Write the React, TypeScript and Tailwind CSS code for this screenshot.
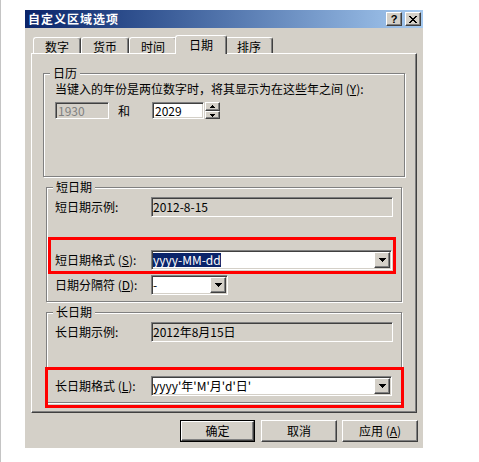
import React from "react";

const sunken =
  "border border-t-[#808080] border-l-[#808080] border-b-white border-r-white shadow-[inset_1px_1px_0_#404040,inset_-1px_-1px_0_#d4d0c8]";
const raised =
  "border border-t-white border-l-white border-b-[#404040] border-r-[#404040] shadow-[inset_-1px_-1px_0_#808080]";

function DownArrow() {
  return (
    <svg width="7" height="4" viewBox="0 0 7 4" shapeRendering="crispEdges">
      <rect x="0" y="0" width="7" height="1" fill="#000" />
      <rect x="1" y="1" width="5" height="1" fill="#000" />
      <rect x="2" y="2" width="3" height="1" fill="#000" />
      <rect x="3" y="3" width="1" height="1" fill="#000" />
    </svg>
  );
}

function SmallArrow({ up }: { up?: boolean }) {
  return (
    <svg width="5" height="3" viewBox="0 0 5 3" shapeRendering="crispEdges">
      {up ? (
        <>
          <rect x="2" y="0" width="1" height="1" fill="#000" />
          <rect x="1" y="1" width="3" height="1" fill="#000" />
          <rect x="0" y="2" width="5" height="1" fill="#000" />
        </>
      ) : (
        <>
          <rect x="0" y="0" width="5" height="1" fill="#000" />
          <rect x="1" y="1" width="3" height="1" fill="#000" />
          <rect x="2" y="2" width="1" height="1" fill="#000" />
        </>
      )}
    </svg>
  );
}

function CloseGlyph() {
  return (
    <svg width="8" height="7" viewBox="0 0 8 7" shapeRendering="crispEdges">
      <rect x="0" y="0" width="2" height="1" fill="#000" />
      <rect x="6" y="0" width="2" height="1" fill="#000" />
      <rect x="1" y="1" width="2" height="1" fill="#000" />
      <rect x="5" y="1" width="2" height="1" fill="#000" />
      <rect x="2" y="2" width="4" height="1" fill="#000" />
      <rect x="3" y="3" width="2" height="1" fill="#000" />
      <rect x="2" y="4" width="4" height="1" fill="#000" />
      <rect x="1" y="5" width="2" height="1" fill="#000" />
      <rect x="5" y="5" width="2" height="1" fill="#000" />
      <rect x="0" y="6" width="2" height="1" fill="#000" />
      <rect x="6" y="6" width="2" height="1" fill="#000" />
    </svg>
  );
}

function Group({
  label,
  className,
  children,
}: {
  label: string;
  className: string;
  children: React.ReactNode;
}) {
  return (
    <div
      className={`relative flex flex-col border border-[#808080] shadow-[inset_1px_1px_0_#fff,1px_1px_0_#fff] ${className}`}
    >
      <span className="absolute left-[6px] top-[-8px] bg-[#d4d0c8] px-[3px] leading-[14px]">
        {label}
      </span>
      {children}
    </div>
  );
}

function Row({
  className,
  label,
  children,
}: {
  className: string;
  label: React.ReactNode;
  children: React.ReactNode;
}) {
  return (
    <div className={`flex items-center pl-[8px] ${className}`}>
      <div className="w-[96px] shrink-0">{label}</div>
      {children}
    </div>
  );
}

function Combo({ className, children }: { className: string; children: React.ReactNode }) {
  return (
    <div className={`${sunken} bg-white h-[20px] flex items-center pl-[1px] pr-[1px] ${className}`}>
      <div className="flex-1 flex items-center whitespace-nowrap">{children}</div>
      <div className={`${raised} bg-[#d4d0c8] w-[16px] h-[16px] flex items-center justify-center`}>
        <DownArrow />
      </div>
    </div>
  );
}

function Tab({ label, selected }: { label: string; selected?: boolean }) {
  if (selected) {
    return (
      <div className="relative z-10 w-[52px] -mx-[2px] h-[19px] -mb-[1px] bg-[#d4d0c8] border-l border-t border-white border-r border-r-[#404040] rounded-t-[3px] shadow-[inset_-1px_0_0_#808080] flex justify-center pt-[2px]">
        {label}
      </div>
    );
  }
  return (
    <div className="w-[48px] h-[16px] bg-[#d4d0c8] border-l border-t border-white border-r border-r-[#404040] rounded-t-[3px] shadow-[inset_-1px_0_0_#808080] flex justify-center pt-[2px]">
      {label}
    </div>
  );
}

function Button({
  children,
  def,
  className,
}: {
  children: React.ReactNode;
  def?: boolean;
  className: string;
}) {
  if (def) {
    return (
      <div className={`border border-black h-[22px] ${className}`}>
        <div className={`${raised} h-full bg-[#d4d0c8] flex items-center justify-center`}>
          {children}
        </div>
      </div>
    );
  }
  return (
    <div className={`${raised} h-[22px] bg-[#d4d0c8] flex items-center justify-center ${className}`}>
      {children}
    </div>
  );
}

export default function App() {
  return (
    <div className="w-[479px] h-[462px] bg-white border-l border-[#c4c4c4] pl-[24px] pt-[10px] font-['Noto_Sans_CJK_SC',sans-serif] text-[12px] leading-[14px] text-black">
      <div className="w-[398px] h-[438px] bg-[#d4d0c8] flex flex-col">
        {/* Title bar */}
        <div className="h-[18px] bg-linear-to-r from-[#0a246a] to-[#a6caf0] flex items-center pl-[3px] pr-[2px]">
          <span className="flex-1 text-white font-bold tracking-[1px]">自定义区域选项</span>
          <div className="flex gap-[3px]">
            <div
              className={`${raised} w-[16px] h-[14px] bg-[#d4d0c8] flex items-center justify-center font-['Liberation_Sans',sans-serif] font-bold text-[11px] leading-[11px]`}
            >
              ?
            </div>
            <div className={`${raised} w-[16px] h-[14px] bg-[#d4d0c8] flex items-center justify-center`}>
              <CloseGlyph />
            </div>
          </div>
        </div>

        <div className="pl-[6px] pt-[7px] flex flex-col">
          {/* Tabs */}
          <div className="flex items-end h-[18px] pl-[2px]">
            <Tab label="数字" />
            <Tab label="货币" />
            <Tab label="时间" />
            <Tab label="日期" selected />
            <Tab label="排序" />
          </div>

          {/* Panel */}
          <div className="w-[386px] h-[360px] border-l border-t border-white border-r border-b border-r-[#404040] border-b-[#404040] shadow-[inset_-1px_-1px_0_#808080] flex flex-col">
            <Group label="日历" className="ml-[11px] mt-[19px] w-[362px] h-[104px]">
              <div className="pl-[11px] mt-[8px] whitespace-nowrap">
                当键入的年份是两位数字时，将其显示为在这些年之间 (<u>Y</u>):
              </div>
              <div className="pl-[11px] mt-[6px] flex items-center h-[17px]">
                <div className={`${sunken} w-[54px] h-[17px] bg-[#d4d0c8] text-[#808080] pl-[2px] flex items-center`}>
                  1930
                </div>
                <div className="w-[43px] pl-[9px]">和</div>
                <div className={`${sunken} w-[52px] h-[17px] bg-white pl-[2px] flex items-center`}>
                  2029
                </div>
                <div className="ml-[1px] flex flex-col w-[15px] h-[17px]">
                  <div className={`${raised} h-[9px] bg-[#d4d0c8] flex items-center justify-center`}>
                    <SmallArrow up />
                  </div>
                  <div className={`${raised} h-[8px] bg-[#d4d0c8] flex items-center justify-center`}>
                    <SmallArrow />
                  </div>
                </div>
              </div>
            </Group>

            <Group label="短日期" className="ml-[14px] mt-[10px] w-[356px] h-[115px]">
              <Row className="mt-[9px]" label="短日期示例:">
                <div className={`${sunken} w-[242px] h-[20px] bg-[#d4d0c8] pl-[1px] flex items-center`}>
                  2012-8-15
                </div>
              </Row>
              <Row
                className="mt-[33px]"
                label={
                  <>
                    短日期格式 (<u>S</u>):
                  </>
                }
              >
                <Combo className="w-[241px]">
                  <span className="bg-[#0a246a] text-white leading-[14px]">yyyy-MM-dd</span>
                </Combo>
              </Row>
              <Row
                className="mt-[5px]"
                label={
                  <>
                    日期分隔符 (<u>D</u>):
                  </>
                }
              >
                <Combo className="w-[77px]">
                  <span>-</span>
                </Combo>
              </Row>
              <div className="absolute left-[1px] top-[49px] w-[348px] h-[37px] border-[3px] border-[#ff0000] pointer-events-none" />
            </Group>

            <Group label="长日期" className="ml-[14px] mt-[10px] w-[356px] h-[91px]">
              <Row className="mt-[9px]" label="长日期示例:">
                <div className={`${sunken} w-[242px] h-[20px] bg-[#d4d0c8] pl-[1px] flex items-center`}>
                  2012年8月15日
                </div>
              </Row>
              <Row
                className="mt-[34px]"
                label={
                  <>
                    长日期格式 (<u>L</u>):
                  </>
                }
              >
                <Combo className="w-[241px]">
                  <span>yyyy'年'M'月'd'日'</span>
                </Combo>
              </Row>
              <div className="absolute left-[-2px] top-[54px] w-[359px] h-[41px] border-[3px] border-[#ff0000] pointer-events-none" />
            </Group>
          </div>

          {/* Buttons */}
          <div className="mt-[7px] w-[387px] flex justify-end">
            <Button def className="w-[75px]">
              确定
            </Button>
            <Button className="w-[76px] ml-[6px]">取消</Button>
            <Button className="w-[76px] ml-[5px]">
              <span>
                应用 (<u>A</u>)
              </span>
            </Button>
          </div>
        </div>
      </div>
    </div>
  );
}
